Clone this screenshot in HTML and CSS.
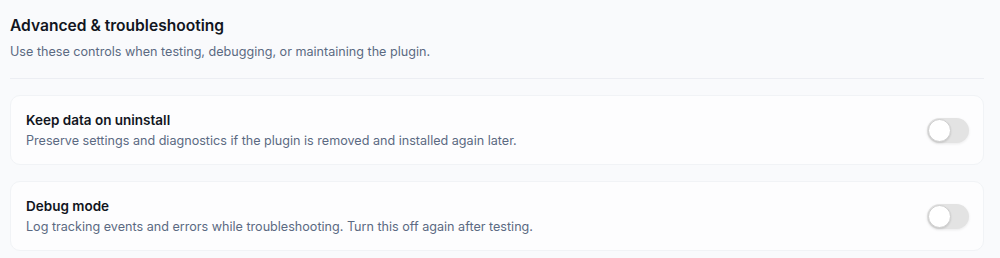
FILE: index.html
```html
<!DOCTYPE html>
<html lang="en">
<head>
<meta charset="utf-8">
<title>Advanced &amp; troubleshooting</title>
<link rel="stylesheet" href="styles.css">
</head>
<body>
<main class="panel">
  <header class="panel-head">
    <h2 class="panel-title">Advanced &amp; troubleshooting</h2>
    <p class="panel-sub">Use these controls when testing, debugging, or maintaining the plugin.</p>
  </header>
  <div class="rows">
    <section class="row">
      <div class="row-text">
        <h3 class="row-title">Keep data on uninstall</h3>
        <p class="row-desc">Preserve settings and diagnostics if the plugin is removed and installed again later.</p>
      </div>
      <span class="toggle" role="switch" aria-checked="false"><span class="knob"></span></span>
    </section>
    <section class="row">
      <div class="row-text">
        <h3 class="row-title">Debug mode</h3>
        <p class="row-desc">Log tracking events and errors while troubleshooting. Turn this off again after testing.</p>
      </div>
      <span class="toggle" role="switch" aria-checked="false"><span class="knob"></span></span>
    </section>
  </div>
</main>
</body>
</html>
```

FILE: styles.css
```css
html, body {
  margin: 0;
  padding: 0;
  background: #f9fafc;
}
body {
  font-family: Inter, "Noto Sans", "Liberation Sans", sans-serif;
  color: #111827;
  width: 1000px;
  height: 258px;
  overflow: hidden;
}
.panel {
  padding: 16px 16px 0 10px;
}
.panel-head {
  border-bottom: 1px solid #eceef3;
  padding-bottom: 16px;
}
.panel-title {
  margin: 0;
  font-size: 15.6px;
  line-height: 20px;
  font-weight: 600;
  color: #111521;
}
.panel-sub {
  margin: 6px 0 0;
  font-size: 12.6px;
  line-height: 20px;
  color: #5b6a82;
}
.rows {
  display: flex;
  flex-direction: column;
  gap: 16px;
  padding-top: 16px;
}
.row {
  display: flex;
  align-items: center;
  justify-content: space-between;
  background: #fdfdfe;
  border: 1px solid #f1f3f6;
  border-radius: 10px;
  padding: 14px 14px 13px 15px;
}
.row-title {
  margin: 0;
  font-size: 13.5px;
  line-height: 20px;
  font-weight: 600;
  color: #111521;
}
.row-desc {
  margin: 1px 0 0;
  font-size: 12.6px;
  line-height: 20px;
  color: #5b6a82;
}
.toggle {
  position: relative;
  display: block;
  width: 42px;
  height: 25px;
  border-radius: 13px;
  background: #e3e3e3;
  box-shadow: 0 1px 3px rgba(0, 0, 0, 0.08);
  flex: none;
}
.knob {
  position: absolute;
  left: 1px;
  top: 1px;
  width: 21px;
  height: 21px;
  border-radius: 50%;
  background: #ffffff;
  border: 1px solid #cfcfcf;
  box-shadow: 0 1px 2px rgba(0, 0, 0, 0.12);
}
```
